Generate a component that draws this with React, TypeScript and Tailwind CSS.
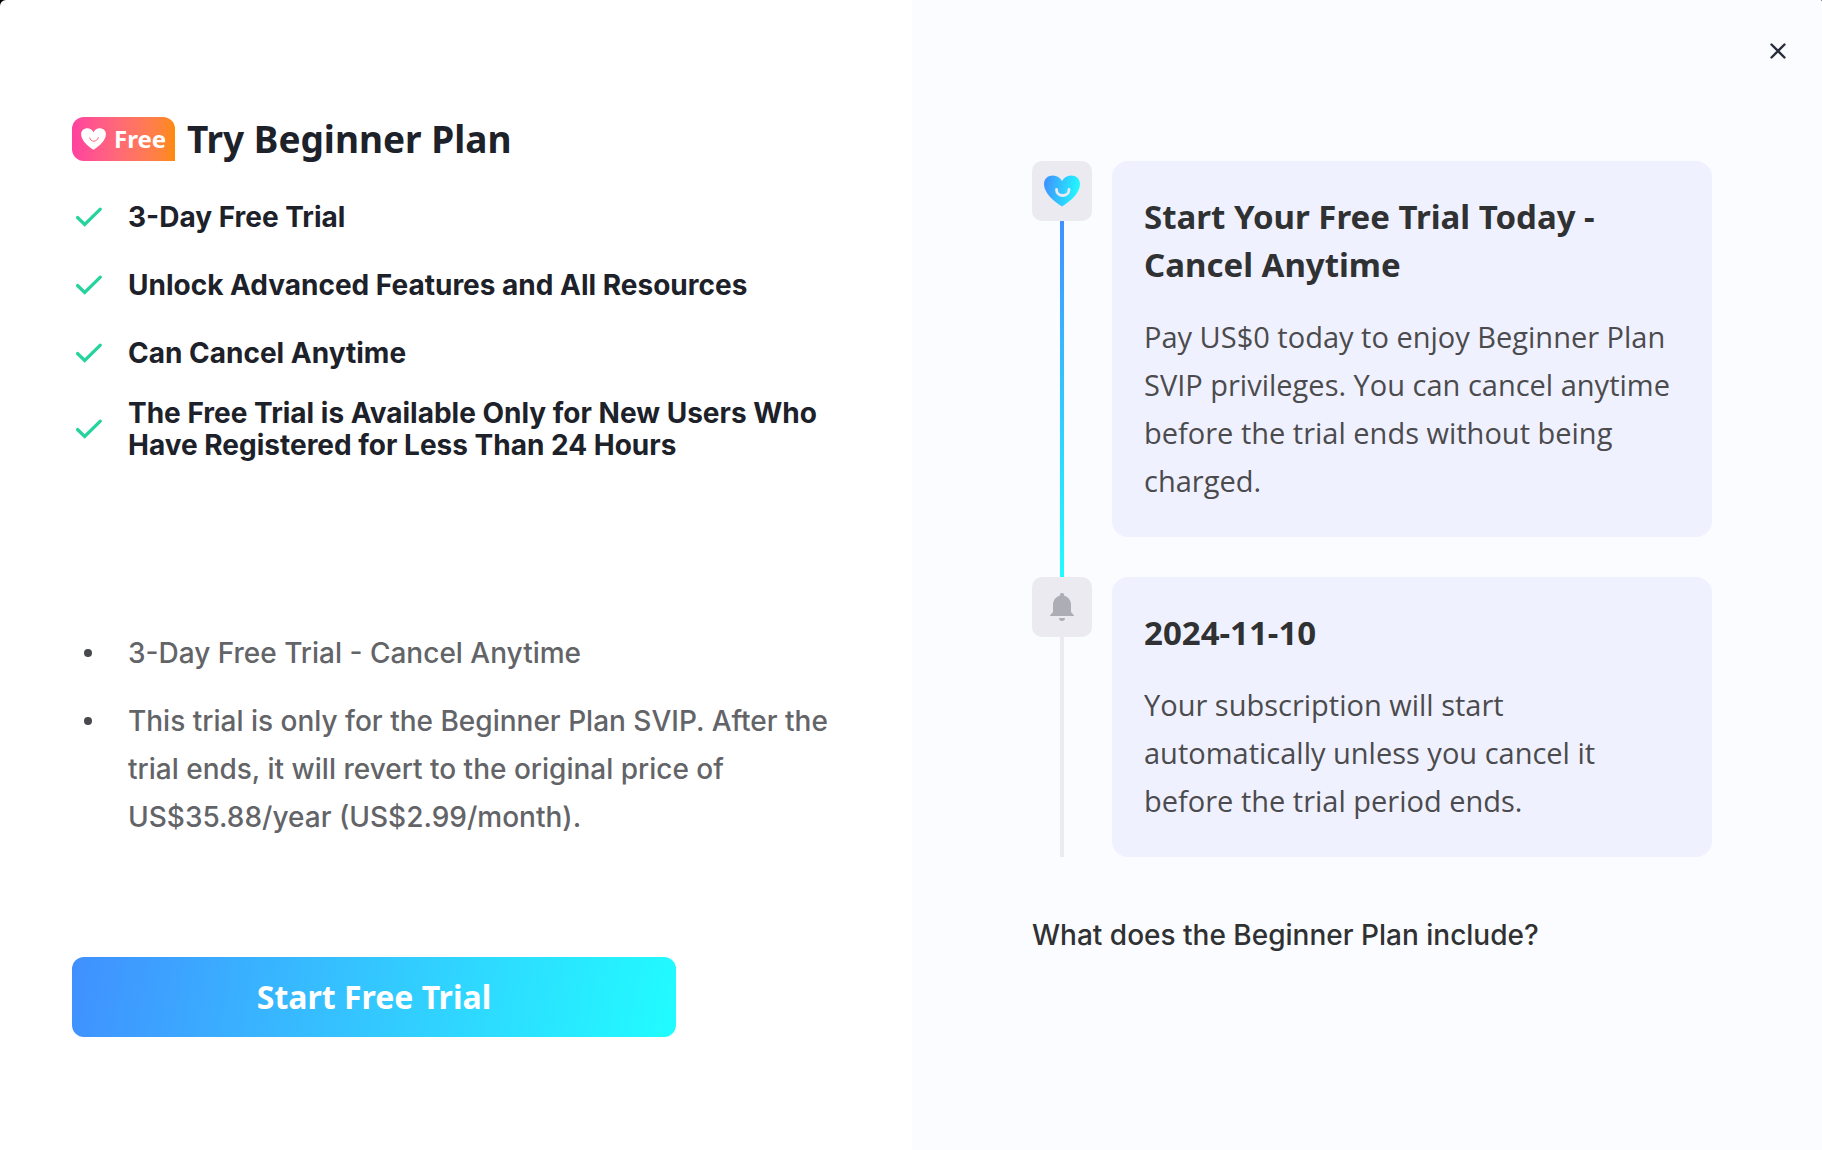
import React from 'react';

const perks = [
  '3-Day Free Trial',
  'Unlock Advanced Features and All Resources',
  'Can Cancel Anytime',
  'The Free Trial is Available Only for New Users Who Have Registered for Less Than 24 Hours',
];

const notes = [
  '3-Day Free Trial - Cancel Anytime',
  'This trial is only for the Beginner Plan SVIP. After the trial ends, it will revert to the original price of US$35.88/year (US$2.99/month).',
];

const HEART_PATH =
  'M18 31.5C9 26 0 17.5 0 9C0 3.8 4 0.5 9 0.5C13 0.5 16 2.8 18 6C20 2.8 23 0.5 27 0.5C32 0.5 36 3.8 36 9C36 17.5 27 26 18 31.5Z';

const CheckIcon: React.FC = () => (
  <svg className="w-8 h-7 shrink-0" viewBox="0 0 32 28" fill="none" aria-hidden="true">
    <path d="M5.5 14.5L12.7 21.5L28.3 6.2" stroke="#25D39C" strokeWidth="3.2" strokeLinecap="round" />
  </svg>
);

const BadgeHeart: React.FC = () => (
  <svg className="w-[25px] h-[22px]" viewBox="0 0 36 32" fill="none" aria-hidden="true">
    <path d={HEART_PATH} fill="#fff" />
    <path d="M12.5 14.5C13.5 21 23.5 21 25 14" stroke="#FF5A78" strokeWidth="1.4" strokeLinecap="round" />
  </svg>
);

const StepHeart: React.FC = () => (
  <svg className="w-9 h-8" viewBox="0 0 36 32" fill="none" aria-hidden="true">
    <defs>
      <linearGradient id="heart" x1="0" y1="8" x2="36" y2="14" gradientUnits="userSpaceOnUse">
        <stop stopColor="#4090FF" />
        <stop offset="1" stopColor="#20FCFF" />
      </linearGradient>
    </defs>
    <path d={HEART_PATH} fill="url(#heart)" />
    <path d="M12.5 14.5C12.5 22.5 25 22.5 25 14.5" stroke="#EBEAF0" strokeWidth="2.8" strokeLinecap="round" />
  </svg>
);

const BellIcon: React.FC = () => (
  <svg className="w-6 h-7" viewBox="0 0 24 28" fill="#ADADB6" aria-hidden="true">
    <path d="M12 0C13.2 0 14.2 0.9 14.2 2.2V2.8C18.4 3.8 21 7.4 21 11.8V19L24 22.4V23H0V22.4L3 19V11.8C3 7.4 5.6 3.8 9.8 2.8V2.2C9.8 0.9 10.8 0 12 0Z" />
    <path d="M9 25H15C15 26.8 13.8 28 12 28C10.2 28 9 26.8 9 25Z" />
  </svg>
);

interface StepProps {
  icon: React.ReactNode;
  title: string;
  text: string;
  active?: boolean;
  last?: boolean;
}

const Step: React.FC<StepProps> = ({ icon, title, text, active, last }) => (
  <li className="flex gap-5">
    <div className="flex flex-col items-center">
      <div className="w-15 h-15 shrink-0 rounded-[10px] bg-[#ebeaf0] flex items-center justify-center">{icon}</div>
      <div className={`w-1 flex-1 ${active ? 'bg-linear-to-b from-[#4090ff] to-[#20fcff]' : 'bg-[#ebeaf0]'}`} />
    </div>
    <div className={`flex-1 ${last ? '' : 'pb-10'}`}>
      <div className="rounded-2xl bg-[#f0f1ff] p-8">
        <h3 className="text-[33px] leading-12 font-bold text-[#303133] font-['Noto_Sans',sans-serif]">{title}</h3>
        <p className="mt-6 text-[29px] leading-12 text-[#4b4b4d] font-['Open_Sans',sans-serif]">{text}</p>
      </div>
    </div>
  </li>
);

export default function App() {
  return (
    <div className="bg-black">
      <main className="min-h-screen flex bg-white rounded-tl-[6px] rounded-tr-[2px] overflow-hidden font-['Inter',sans-serif]">
        <section className="flex-1 px-18 pt-[115px] pb-16">
          <header className="flex items-center gap-3 font-['Noto_Sans',sans-serif]">
            <span className="w-[103px] h-11 flex items-center justify-center gap-2 rounded-xl rounded-br-none bg-linear-to-r from-[#ff40a0] to-[#ff8a00] text-white text-2xl font-bold">
              <BadgeHeart />
              Free
            </span>
            <h1 className="text-[37px] leading-12 font-bold text-[#1d2129]">Try Beginner Plan</h1>
          </header>

          <ul className="mt-[30px] flex flex-col gap-5">
            {perks.map((perk) => (
              <li key={perk} className="min-h-12 flex items-center gap-6">
                <CheckIcon />
                <span className="text-[28px] leading-8 font-bold text-[#1d2129]">{perk}</span>
              </li>
            ))}
          </ul>

          <ul className="mt-[168px] flex flex-col gap-5">
            {notes.map((note) => (
              <li key={note} className="flex gap-9">
                <span className="ml-3 mt-5 w-2 h-2 shrink-0 rounded-full bg-[#48494c]" />
                <span className="text-[28px] leading-12 font-medium text-[#636468]">{note}</span>
              </li>
            ))}
          </ul>

          <button
            type="button"
            className="mt-[116px] w-[604px] h-20 rounded-xl bg-linear-100 from-[#4090ff] to-[#20fcff] text-white text-[32px] font-bold font-['Noto_Sans',sans-serif]"
          >
            Start Free Trial
          </button>
        </section>

        <aside className="w-[910px] bg-[#fbfcff] pl-[120px] pr-[110px]">
          <div className="h-[161px] pt-[35px] -mr-[82px] flex justify-end items-start">
            <button type="button" aria-label="Close" className="w-8 h-8 flex items-center justify-center">
              <svg className="w-4 h-4" viewBox="0 0 16 16" fill="none" aria-hidden="true">
                <path d="M1.5 1.5L14.5 14.5M14.5 1.5L1.5 14.5" stroke="#272E3B" strokeWidth="2.4" strokeLinecap="round" />
              </svg>
            </button>
          </div>
          <ol>
            <Step
              icon={<StepHeart />}
              title="Start Your Free Trial Today - Cancel Anytime"
              text="Pay US$0 today to enjoy Beginner Plan SVIP privileges. You can cancel anytime before the trial ends without being charged."
              active
            />
            <Step
              icon={<BellIcon />}
              title="2024-11-10"
              text="Your subscription will start automatically unless you cancel it before the trial period ends."
              last
            />
          </ol>
          <p className="mt-[54px] text-[28px] leading-12 font-medium text-[#303133]">What does the Beginner Plan include?</p>
        </aside>
      </main>
    </div>
  );
}
